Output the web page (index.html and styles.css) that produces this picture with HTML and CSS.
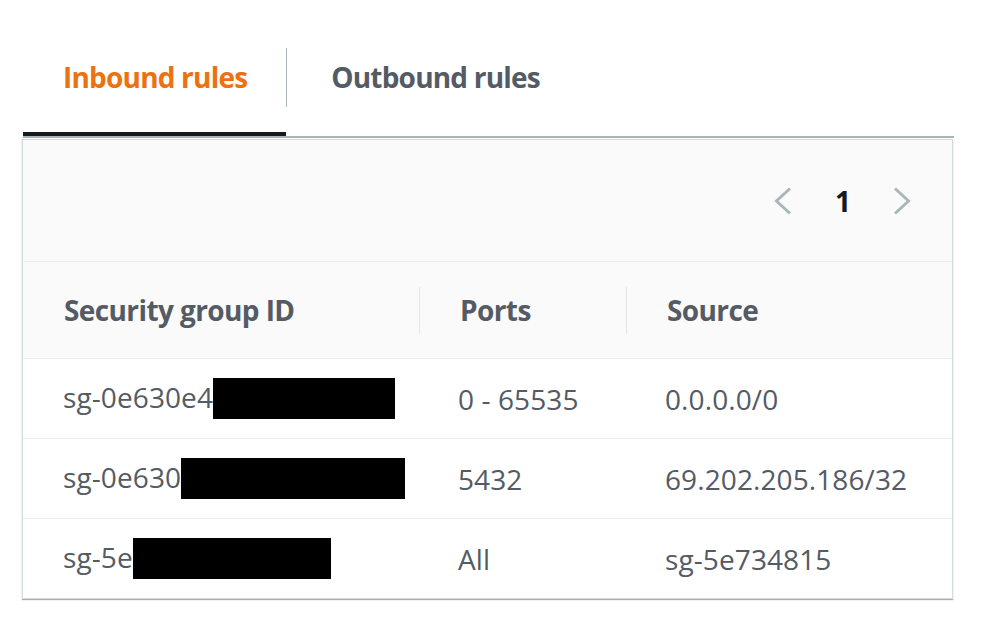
FILE: index.html
```html
<!DOCTYPE html>
<html>
<head>
<meta charset="utf-8">
<link rel="stylesheet" href="styles.css">
</head>
<body>
<div class="tabs">
  <div class="tab active"><span class="tab-label">Inbound rules</span></div>
  <div class="tab"><span class="tab-label sep">Outbound rules</span></div>
</div>
<div class="table-box">
  <div class="toolbar">
    <div class="pager">
      <svg class="chev" width="18" height="28" viewBox="0 0 18 28"><polyline points="16,1.5 2.5,14 16,26.5" fill="none" stroke="#aab7b8" stroke-width="3"/></svg>
      <span class="page">1</span>
      <svg class="chev" width="18" height="28" viewBox="0 0 18 28"><polyline points="2,1.5 15.5,14 2,26.5" fill="none" stroke="#aab7b8" stroke-width="3"/></svg>
    </div>
  </div>
  <div class="grid head">
    <div class="cell"><span>Security group ID</span></div>
    <div class="cell div"><span>Ports</span></div>
    <div class="cell div"><span>Source</span></div>
  </div>
  <div class="grid row">
    <div class="cell">sg-0e630e4<span class="redact r1"></span></div>
    <div class="cell">0 - 65535</div>
    <div class="cell">0.0.0.0/0</div>
  </div>
  <div class="grid row">
    <div class="cell">sg-0e630<span class="redact r2"></span></div>
    <div class="cell">5432</div>
    <div class="cell">69.202.205.186/32</div>
  </div>
  <div class="grid row last">
    <div class="cell">sg-5e<span class="redact r3"></span></div>
    <div class="cell">All</div>
    <div class="cell">sg-5e734815</div>
  </div>
</div>
</body>
</html>
```
FILE: styles.css
```css
html, body {
  margin: 0;
  padding: 0;
  background: #ffffff;
}
body {
  font-family: "Open Sans", "Liberation Sans", sans-serif;
  color: #545b64;
  width: 988px;
  height: 628px;
  overflow: hidden;
}
.tabs {
  display: flex;
  margin: 0 34px 0 23px;
  padding-top: 48px;
  border-bottom: 2px solid #aab7b8;
}
.tab {
  height: 84px;
  border-bottom: 4px solid transparent;
  font-size: 28px;
  font-weight: 700;
  color: #545b64;
}
.tab.active {
  border-bottom-color: #16191f;
  color: #ec7211;
  padding: 0 39px 0 40px;
}
.tab-label {
  display: block;
  height: 59px;
  line-height: 59px;
  letter-spacing: -0.8px;
}
.tab-label.sep {
  border-left: 1px solid #aab7b8;
  padding-left: 44px;
}
.table-box {
  margin: 1px 35px 0 22px;
  border: 1px solid #d5dbdb;
  box-shadow: 0 1px 1px 0 rgba(0, 28, 36, 0.35);
}
.toolbar {
  height: 121px;
  background: #fafafa;
  display: flex;
  justify-content: flex-end;
  align-items: center;
  border-bottom: 1px solid #eaeded;
}
.pager {
  display: flex;
  align-items: center;
  margin-right: 41px;
}
.chev {
  display: block;
}
.page {
  font-size: 28px;
  font-weight: 700;
  color: #16191f;
  margin: 0 42px 0 43px;
}
.grid {
  display: grid;
  grid-template-columns: 396px 207px 1fr;
  border-bottom: 1px solid #eaeded;
}
.head {
  height: 96px;
  background: #fafafa;
  align-items: center;
  font-weight: 700;
  font-size: 28px;
  letter-spacing: -0.6px;
}
.head .cell {
  padding-left: 41px;
  height: 47px;
  line-height: 47px;
}
.head .cell.div {
  border-left: 1px solid #e3e7e7;
  padding-left: 40px;
}
.row {
  height: 79px;
  align-items: center;
  font-size: 28px;
  letter-spacing: 0.1px;
  background: #ffffff;
}
.row.last {
  border-bottom: none;
}
.row .cell {
  padding-left: 39px;
  white-space: nowrap;
}
.row .cell:first-child {
  padding-left: 40px;
}
.redact {
  display: inline-block;
  background: #000;
  height: 41px;
  vertical-align: middle;
  margin-top: -4px;
}
.r1 { width: 182px; }
.r2 { width: 224px; }
.r3 { width: 198px; }
```
